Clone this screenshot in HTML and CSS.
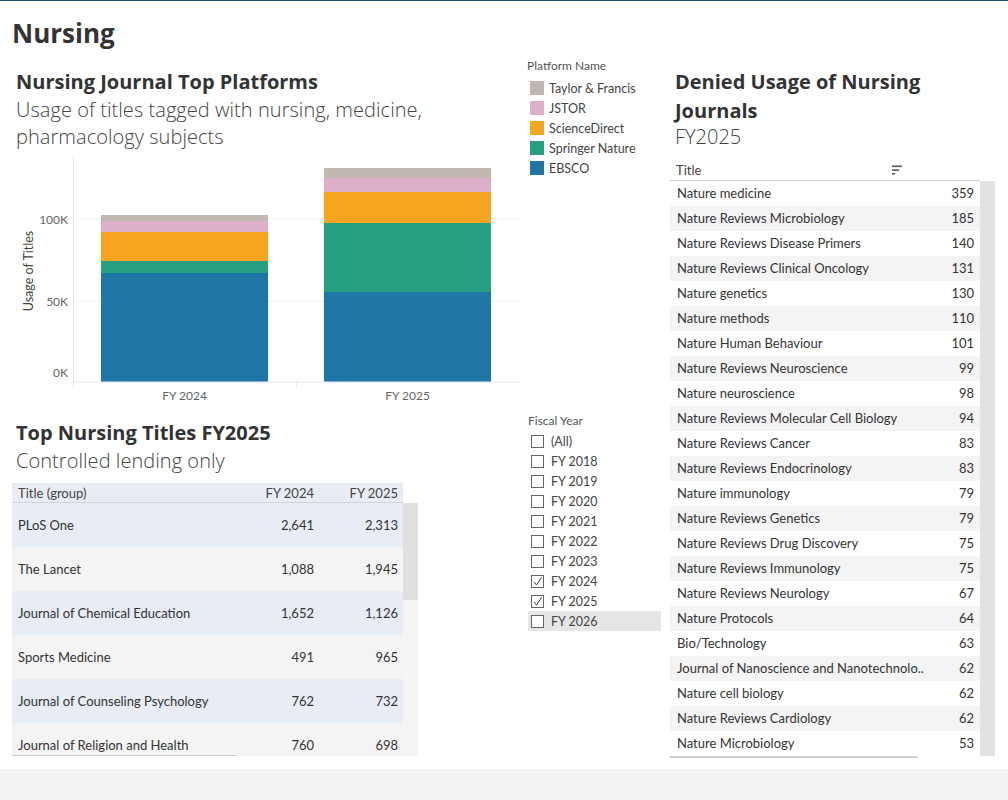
FILE: index.html
```html
<!DOCTYPE html>
<html lang="en">
<head>
<meta charset="utf-8">
<title>Nursing</title>
<link rel="stylesheet" href="styles.css">
</head>
<body>
<div class="dash">
  <header class="top"><h1>Nursing</h1></header>
  <div class="main">
    <section class="chart-panel">
      <h2 class="ptitle">Nursing Journal Top Platforms</h2>
      <p class="psub">Usage of titles tagged with nursing, medicine,<br>pharmacology subjects</p>
      <svg class="chart" width="520" height="250" viewBox="0 0 520 250">
        <line class="grid" x1="73" y1="64" x2="519" y2="64"/>
        <line class="grid" x1="73" y1="146" x2="519" y2="146"/>
        <rect x="101" y="118" width="167" height="109" fill="#1f77a5"/>
        <rect x="101" y="106" width="167" height="12" fill="#259f7f"/>
        <rect x="101" y="77" width="167" height="29" fill="#f5a51f"/>
        <rect x="101" y="66" width="167" height="11" fill="#ddafc8"/>
        <rect x="101" y="60" width="167" height="6" fill="#c1b8b2"/>
        <rect x="324" y="137" width="167" height="90" fill="#1f77a5"/>
        <rect x="324" y="68" width="167" height="69" fill="#259f7f"/>
        <rect x="324" y="37" width="167" height="31" fill="#f5a51f"/>
        <rect x="324" y="23" width="167" height="14" fill="#ddafc8"/>
        <rect x="324" y="13" width="167" height="10" fill="#c1b8b2"/>
        <line class="axis" x1="73" y1="227" x2="519" y2="227"/>
        <line class="axis" x1="73.5" y1="2" x2="73.5" y2="232"/>
        <line class="axis" x1="296.5" y1="227" x2="296.5" y2="232"/>
        <text class="tick" x="68" y="64" text-anchor="end" dominant-baseline="central">100K</text>
        <text class="tick" x="68" y="146" text-anchor="end" dominant-baseline="central">50K</text>
        <text class="tick" x="68" y="217" text-anchor="end" dominant-baseline="central">0K</text>
        <text class="tick" x="184.5" y="240" text-anchor="middle" dominant-baseline="central">FY 2024</text>
        <text class="tick" x="407.5" y="240" text-anchor="middle" dominant-baseline="central">FY 2025</text>
        <text class="ytitle" x="28" y="116" text-anchor="middle" dominant-baseline="central" transform="rotate(-90 28 116)">Usage of Titles</text>
      </svg>
    </section>

    <aside class="legend">
      <div class="ltitle">Platform Name</div>
      <ul class="litems">
        <li><span class="sw sw-tf"></span>Taylor &amp; Francis</li>
        <li><span class="sw sw-js"></span>JSTOR</li>
        <li><span class="sw sw-sd"></span>ScienceDirect</li>
        <li><span class="sw sw-sn"></span>Springer Nature</li>
        <li><span class="sw sw-eb"></span>EBSCO</li>
      </ul>
    </aside>

    <section class="denied">
      <h2 class="dtitle">Denied Usage of Nursing Journals</h2>
      <p class="dsub">FY2025</p>
      <div class="dtable">
        <div class="dhead">
          <span>Title</span>
          <svg class="sort" width="10" height="10" viewBox="0 0 10 10"><rect x="0" y="0.5" width="10" height="1.6" fill="#555"/><rect x="0" y="4.3" width="7" height="1.6" fill="#555"/><rect x="0" y="8" width="3" height="1.6" fill="#555"/></svg>
        </div>
        <div class="dbody">
          <ul class="drows">
            <li><span>Nature medicine</span><span>359</span></li>
            <li><span>Nature Reviews Microbiology</span><span>185</span></li>
            <li><span>Nature Reviews Disease Primers</span><span>140</span></li>
            <li><span>Nature Reviews Clinical Oncology</span><span>131</span></li>
            <li><span>Nature genetics</span><span>130</span></li>
            <li><span>Nature methods</span><span>110</span></li>
            <li><span>Nature Human Behaviour</span><span>101</span></li>
            <li><span>Nature Reviews Neuroscience</span><span>99</span></li>
            <li><span>Nature neuroscience</span><span>98</span></li>
            <li><span>Nature Reviews Molecular Cell Biology</span><span>94</span></li>
            <li><span>Nature Reviews Cancer</span><span>83</span></li>
            <li><span>Nature Reviews Endocrinology</span><span>83</span></li>
            <li><span>Nature immunology</span><span>79</span></li>
            <li><span>Nature Reviews Genetics</span><span>79</span></li>
            <li><span>Nature Reviews Drug Discovery</span><span>75</span></li>
            <li><span>Nature Reviews Immunology</span><span>75</span></li>
            <li><span>Nature Reviews Neurology</span><span>67</span></li>
            <li><span>Nature Protocols</span><span>64</span></li>
            <li><span>Bio/Technology</span><span>63</span></li>
            <li><span>Journal of Nanoscience and Nanotechnolo..</span><span>62</span></li>
            <li><span>Nature cell biology</span><span>62</span></li>
            <li><span>Nature Reviews Cardiology</span><span>62</span></li>
            <li><span>Nature Microbiology</span><span>53</span></li>
          </ul>
          <div class="vscroll"></div>
        </div>
        <div class="hscroll"></div>
      </div>
    </section>

    <section class="titles">
      <h2 class="ptitle">Top Nursing Titles FY2025</h2>
      <p class="psub">Controlled lending only</p>
      <div class="ttable">
        <div class="thead">
          <span>Title (group)</span><span class="num">FY 2024</span><span class="num">FY 2025</span>
        </div>
        <div class="tbodywrap">
          <div class="tbody">
            <div class="trow"><span>PLoS One</span><span class="num">2,641</span><span class="num">2,313</span></div>
            <div class="trow"><span>The Lancet</span><span class="num">1,088</span><span class="num">1,945</span></div>
            <div class="trow"><span>Journal of Chemical Education</span><span class="num">1,652</span><span class="num">1,126</span></div>
            <div class="trow"><span>Sports Medicine</span><span class="num">491</span><span class="num">965</span></div>
            <div class="trow"><span>Journal of Counseling Psychology</span><span class="num">762</span><span class="num">732</span></div>
            <div class="trow"><span>Journal of Religion and Health</span><span class="num">760</span><span class="num">698</span></div>
          </div>
          <div class="tscroll"><div class="tthumb"></div></div>
        </div>
        <div class="thscroll"></div>
      </div>
    </section>

    <aside class="filter">
      <div class="ftitle">Fiscal Year</div>
      <ul class="fitems">
        <li><span class="cb"></span>(All)</li>
        <li><span class="cb"></span>FY 2018</li>
        <li><span class="cb"></span>FY 2019</li>
        <li><span class="cb"></span>FY 2020</li>
        <li><span class="cb"></span>FY 2021</li>
        <li><span class="cb"></span>FY 2022</li>
        <li><span class="cb"></span>FY 2023</li>
        <li><span class="cb"><svg width="11" height="11" viewBox="0 0 11 11"><polyline points="2,6 4.5,9 9.5,1.5" fill="none" stroke="#333" stroke-width="1"/></svg></span>FY 2024</li>
        <li><span class="cb"><svg width="11" height="11" viewBox="0 0 11 11"><polyline points="2,6 4.5,9 9.5,1.5" fill="none" stroke="#333" stroke-width="1"/></svg></span>FY 2025</li>
        <li class="hl"><span class="cb"></span>FY 2026</li>
      </ul>
    </aside>
  </div>
</div>
<div class="footer"></div>
</body>
</html>
```

FILE: styles.css
```css
* { box-sizing: border-box; }
html, body { margin: 0; padding: 0; background: #fff; }
body { font-family: Lato, "Open Sans", sans-serif; color: #333; width: 1008px; height: 800px; overflow: hidden; }
ul { list-style: none; margin: 0; padding: 0; }
h1, h2, p { margin: 0; }

.dash { height: 769px; border-top: 1px solid #1f4e6e; display: flex; flex-direction: column; }
.top { height: 56px; padding: 16px 0 0 12px; flex: none; }
.top h1 { font-family: "Open Sans", sans-serif; font-size: 26px; line-height: 32px; font-weight: 700; color: #333; }

.main { flex: 1; display: grid; grid-template-columns: 520px 145px 343px; grid-template-rows: 353px 1fr; }

.chart-panel { grid-column: 1; grid-row: 1; padding-top: 12.5px; }
.ptitle { font-family: "Open Sans", sans-serif; font-size: 20px; line-height: 24px; font-weight: 700; color: #333; padding-left: 16px; }
.psub { font-family: "Open Sans", sans-serif; font-size: 20px; line-height: 27px; font-weight: 300; color: #444; padding-left: 16px; margin-top: 2px; letter-spacing: 0.05px; }
.chart { display: block; margin-top: 5px; }
.grid { stroke: #f0f0f0; stroke-width: 1; }
.axis { stroke: #e6e6e6; stroke-width: 1; }
.tick { font-family: Lato, sans-serif; font-size: 12px; fill: #666; }
.ytitle { font-family: Lato, sans-serif; font-size: 12.5px; fill: #444; }

.legend { grid-column: 2; grid-row: 1; padding: 1px 0 0 7px; }
.ltitle { font-size: 12px; line-height: 16px; color: #555; margin-bottom: 4px; }
.litems li { height: 20px; display: flex; align-items: center; gap: 5px; font-size: 12.5px; color: #444; padding-left: 3px; }
.sw { width: 14px; height: 14px; flex: none; }
.sw-tf { background: #c1b8b2; }
.sw-js { background: #ddafc8; }
.sw-sd { background: #f5a51f; }
.sw-sn { background: #259f7f; }
.sw-eb { background: #1f77a5; }

.denied { grid-column: 3; grid-row: 1 / span 2; padding-top: 9.5px; }
.dtitle { font-family: "Open Sans", sans-serif; font-size: 20px; line-height: 29px; font-weight: 700; color: #333; padding-left: 10px; width: 270px; }
.dsub { font-family: "Open Sans", sans-serif; font-size: 20px; line-height: 24px; font-weight: 300; color: #444; padding-left: 10px; }
.dtable { margin: 8px 0 0 5px; width: 325px; }
.dhead { width: 310px; height: 24px; border-bottom: 1px solid #cfcfcf; display: flex; align-items: center; justify-content: space-between; padding: 3px 78px 0 6px; font-size: 13px; color: #444; }
.dhead .sort { margin-top: 0; }
.dbody { display: flex; }
.drows { width: 310px; }
.drows li { height: 25px; display: flex; align-items: center; justify-content: space-between; padding: 0 6px 0 7px; font-size: 13px; color: #333; white-space: nowrap; }
.drows li:nth-child(even) { background: #f4f4f4; }
.vscroll { width: 15px; background: #e2e2e2; }
.hscroll { width: 248px; height: 2px; background: #d2d2d2; }

.titles { grid-column: 1; grid-row: 2; padding-top: 10.5px; }
.titles .psub { margin-top: 4px; line-height: 24px; }
.ttable { margin: 10px 0 0 12px; width: 406px; }
.thead { width: 391px; height: 20px; background: #e9ecf4; border-bottom: 1px solid #cfd3da; display: grid; grid-template-columns: 1fr 84px 84px; align-items: center; font-size: 13px; color: #444; padding-top: 1px; }
.thead span:first-child { padding-left: 6px; }
.num { text-align: right; padding-right: 5px; }
.tbodywrap { display: flex; height: 253px; overflow: hidden; }
.tbody { width: 391px; flex: none; }
.trow { height: 44px; display: grid; grid-template-columns: 1fr 84px 84px; align-items: center; font-size: 13px; color: #333; background: #e8ecf4; }
.trow:nth-child(even) { background: #f4f4f4; }
.trow span:first-child { padding-left: 6px; }
.tscroll { width: 15px; background: #f5f5f5; }
.tthumb { height: 97px; background: #e0e0e0; }
.thscroll { width: 224px; height: 1px; background: #c8c8c8; margin-top: -1px; position: relative; }

.filter { grid-column: 2; grid-row: 2; padding: 3px 0 0 8px; }
.ftitle { font-size: 12px; line-height: 16px; color: #555; margin-bottom: 2px; }
.fitems li { height: 20px; width: 133px; display: flex; align-items: center; gap: 7px; padding-left: 3px; font-size: 12.5px; color: #444; }
.fitems li.hl { background: #e6e6e6; }
.cb { width: 13px; height: 13px; border: 1px solid #666; background: #fff; flex: none; display: flex; align-items: center; justify-content: center; }
.cb svg { display: block; }

.footer { height: 31px; background: #f3f3f3; }
```
